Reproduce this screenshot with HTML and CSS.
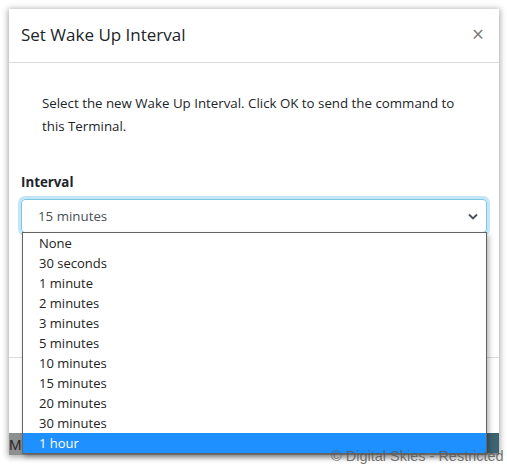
FILE: index.html
```html
<!DOCTYPE html>
<html>
<head>
<meta charset="utf-8">
<link rel="stylesheet" href="styles.css">
</head>
<body>
<div class="frame">
  <div class="modal">
    <div class="modal-header">
      <h5 class="modal-title">Set Wake Up Interval</h5>
      <span class="close">&times;</span>
    </div>
    <div class="modal-body">
      <p class="intro">Select the new Wake Up Interval. Click OK to send the command to this Terminal.</p>
      <label class="label">Interval</label>
      <div class="select-wrap">
        <div class="select">
          <span>15 minutes</span>
          <svg class="chev" width="10" height="7" viewBox="0 0 10 7"><path d="M1 1.5 L5 5.5 L9 1.5" fill="none" stroke="#495057" stroke-width="1.8"/></svg>
        </div>
        <ul class="options">
          <li>None</li>
          <li>30 seconds</li>
          <li>1 minute</li>
          <li>2 minutes</li>
          <li>3 minutes</li>
          <li>5 minutes</li>
          <li>10 minutes</li>
          <li>15 minutes</li>
          <li>20 minutes</li>
          <li>30 minutes</li>
          <li class="active">1 hour</li>
        </ul>
      </div>
    </div>
    <div class="modal-footer"></div>
  </div>
  <div class="backdrop">
    <span class="me">Me</span>
    <span class="teal"></span>
  </div>
</div>
<div class="watermark">&copy; Digital Skies - Restricted</div>
</body>
</html>
```
FILE: styles.css
```css
html, body {
  margin: 0;
  padding: 0;
  background: #ffffff;
  width: 507px;
  height: 465px;
  overflow: hidden;
  position: relative;
}
.frame {
  margin: 9px 0 0 9px;
  width: 490px;
  height: 446px;
  background: #fff;
  box-shadow: 0 1px 6px 1px rgba(0,0,0,0.35);
  display: flex;
  flex-direction: column;
  font-family: "Open Sans", "Noto Sans", sans-serif;
  color: #212529;
}
.modal {
  height: 424px;
  display: flex;
  flex-direction: column;
  background: #fff;
}
.modal-header {
  height: 54px;
  box-sizing: border-box;
  border-bottom: 1px solid #d9dce0;
  display: flex;
  align-items: center;
  justify-content: space-between;
  padding: 0 15px 2px 12px;
}
.modal-title {
  margin: 0;
  font-size: 17px;
  font-weight: 400;
  color: #212529;
}
.close {
  font-size: 21px;
  color: #7a7a7a;
  line-height: 1;
}
.modal-body {
  height: 294px;
  box-sizing: border-box;
  padding: 29px 12px 0 12px;
  display: flex;
  flex-direction: column;
}
.intro {
  margin: 0 24px 34px 21px;
  font-size: 13.3px;
  line-height: 23px;
}
.label {
  font-weight: 700;
  font-size: 13.3px;
  line-height: 21px;
  margin-bottom: 6px;
}
.select-wrap {
  position: relative;
}
.select {
  box-sizing: border-box;
  width: 466px;
  height: 34px;
  border: 1px solid #80c6e0;
  border-radius: 4px;
  box-shadow: 0 0 0 3px rgba(120, 200, 232, 0.45);
  display: flex;
  align-items: center;
  justify-content: space-between;
  padding: 0 8px 0 16px;
  font-size: 13.3px;
  color: #495057;
}
.options {
  position: absolute;
  left: 1px;
  top: 33px;
  width: 465px;
  box-sizing: border-box;
  margin: 0;
  padding: 0;
  list-style: none;
  background: #fff;
  border: 1px solid #646464;
  box-shadow: 2px 3px 5px rgba(0,0,0,0.3);
  font-family: "Open Sans", "Noto Sans", sans-serif;
  font-size: 13px;
  color: #222;
}
.options li {
  height: 20px;
  line-height: 20px;
  padding-left: 16px;
}
.options li.active {
  background: #1e90ff;
  color: #fff;
}
.modal-footer {
  flex: 1;
  border-top: 1px solid #d9dce0;
}
.backdrop {
  flex: 1;
  background: #8d8f90;
  display: flex;
  justify-content: space-between;
  align-items: flex-end;
}
.me {
  font-family: "Liberation Sans", sans-serif;
  font-size: 15px;
  color: #2a2a2a;
  line-height: 18px;
  margin-bottom: 1px;
}
.teal {
  width: 13px;
  height: 20px;
  align-self: flex-start;
  background: #3c6571;
}
.watermark {
  position: absolute;
  left: 331px;
  top: 448px;
  white-space: nowrap;
  font-family: "Liberation Sans", sans-serif;
  font-size: 14.5px;
  color: rgba(90, 90, 90, 0.85);
}
```
